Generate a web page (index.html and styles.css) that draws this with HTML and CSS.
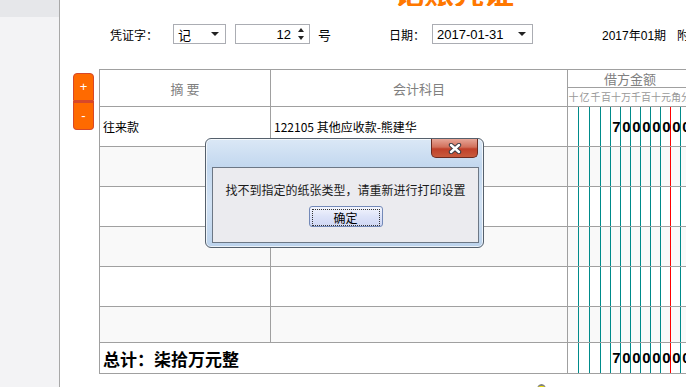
FILE: index.html
```html
<!DOCTYPE html>
<html lang="zh-CN">
<head>
    <meta charset="UTF-8">
    <title>记账凭证</title>
    <link rel="stylesheet" href="styles.css">
</head>
<body>

    <div class="app">
        <aside class="side"><div class="side-top"></div></aside>

        <main class="main">
            <div class="title"><span>记账凭证</span></div>

            <div class="form-row">
                <label class="lbl">凭证字：</label>
                <div class="box sel-word"><span>记</span><i class="arrow"></i></div>
                <div class="box num"><span>12</span><i class="spin"><b class="up"></b><b class="down"></b></i></div>
                <label class="lbl unit">号</label>
                <label class="lbl date-lbl">日期：</label>
                <div class="box sel-date"><span>2017-01-31</span><i class="arrow"></i></div>
                <span class="period">2017年01期</span>
                <span class="attach">附</span>
            </div>

            <div class="voucher">
                <div class="row-tools">
                    <button class="tool add">+</button>
                    <button class="tool del">-</button>
                </div>

                <table class="grid">
                    <colgroup>
                        <col class="c-memo">
                        <col class="c-subject">
                        <col class="c-money">
                    </colgroup>
                    <tr class="head">
                        <th>摘 要</th>
                        <th>会计科目</th>
                        <th class="money">
                            <div class="money-title">借方金额</div>
                            <div class="units">
                                <span>十</span><span>亿</span><span>千</span><span>百</span><span>十</span><span>万</span><span>千</span><span>百</span><span>十</span><span>元</span><span>角</span><span>分</span>
                            </div>
                        </th>
                    </tr>
                    <tr class="line">
                        <td>往来款</td>
                        <td>122105 其他应收款-熊建华</td>
                        <td class="money">
                            <div class="digits">
                                <span></span><span></span><span></span><span></span><span>7</span><span>0</span><span>0</span><span>0</span><span>0</span><span>0</span><span>0</span><span>0</span>
                            </div>
                        </td>
                    </tr>
                    <tr class="line alt">
                        <td></td><td></td>
                        <td class="money"><div class="digits"><span></span><span></span><span></span><span></span><span></span><span></span><span></span><span></span><span></span><span></span><span></span><span></span></div></td>
                    </tr>
                    <tr class="line">
                        <td></td><td></td>
                        <td class="money"><div class="digits"><span></span><span></span><span></span><span></span><span></span><span></span><span></span><span></span><span></span><span></span><span></span><span></span></div></td>
                    </tr>
                    <tr class="line alt">
                        <td></td><td></td>
                        <td class="money"><div class="digits"><span></span><span></span><span></span><span></span><span></span><span></span><span></span><span></span><span></span><span></span><span></span><span></span></div></td>
                    </tr>
                    <tr class="line">
                        <td></td><td></td>
                        <td class="money"><div class="digits"><span></span><span></span><span></span><span></span><span></span><span></span><span></span><span></span><span></span><span></span><span></span><span></span></div></td>
                    </tr>
                    <tr class="line alt short">
                        <td></td><td></td>
                        <td class="money"><div class="digits"><span></span><span></span><span></span><span></span><span></span><span></span><span></span><span></span><span></span><span></span><span></span><span></span></div></td>
                    </tr>
                    <tr class="total">
                        <td colspan="2">总计：柒拾万元整</td>
                        <td class="money">
                            <div class="digits">
                                <span></span><span></span><span></span><span></span><span>7</span><span>0</span><span>0</span><span>0</span><span>0</span><span>0</span><span>0</span><span>0</span>
                            </div>
                        </td>
                    </tr>
                </table>
            </div>

            <div class="foot"><i class="bulb"></i></div>
        </main>
    </div>

    <!-- 打印提示框 -->
    <div class="dialog">
        <div class="close">
            <svg width="14" height="11" viewBox="0 0 14 11">
                <path d="M3 2 L11 9 M11 2 L3 9" stroke="#3c3c44" stroke-width="4.4" stroke-linecap="round"/>
                <path d="M3 2 L11 9 M11 2 L3 9" stroke="#ffffff" stroke-width="2.4" stroke-linecap="round"/>
            </svg>
        </div>
        <div class="panel">
            <p class="msg">找不到指定的纸张类型，请重新进行打印设置</p>
            <button class="ok"><span>确定</span></button>
        </div>
    </div>

</body>
</html>
```

FILE: styles.css
```css
body {
    margin: 0;
    overflow: hidden;
    background: #ffffff;
    font-family: "Noto Sans CJK SC", "Liberation Sans", sans-serif;
    font-size: 12px;
    color: #000;
}
.app {
    display: flex;
    height: 387px;
}
.side {
    width: 59px;
    flex: none;
    background: #f3f3f5;
    border-right: 1px solid #a8a8a8;
}
.side-top {
    height: 17px;
    background: #e6e7ea;
}
.main {
    flex: 1;
    min-width: 0;
    overflow: hidden;
}

/* 标题只露出底部 */
.title {
    height: 6px;
    overflow: hidden;
    padding-left: 334px;
}
.title span {
    display: block;
    margin-top: -24px;
    font-size: 30px;
    line-height: 30px;
    font-weight: bold;
    color: #ff7800;
    white-space: nowrap;
}

.form-row {
    display: flex;
    align-items: center;
    height: 20px;
    margin-top: 18px;
    padding-left: 50px;
    white-space: nowrap;
    font-size: 12px;
}
.form-row > * {
    flex: none;
}
.lbl {
    width: 63px;
}
.box {
    position: relative;
    box-sizing: border-box;
    height: 20px;
    border: 1px solid #abadb3;
    background: #fff;
    display: flex;
    align-items: center;
    font-size: 13px;
}
.sel-word {
    width: 53px;
    padding-left: 4px;
}
.num {
    width: 75px;
    margin-left: 9px;
    justify-content: flex-end;
    padding-right: 18px;
    font-family: "Liberation Sans", sans-serif;
}
.arrow {
    position: absolute;
    right: 6px;
    top: 7px;
    border-left: 4px solid transparent;
    border-right: 4px solid transparent;
    border-top: 4px solid #222;
}
.spin b {
    position: absolute;
    right: 5px;
    border-left: 3px solid transparent;
    border-right: 3px solid transparent;
}
.spin .up {
    top: 3px;
    border-bottom: 4px solid #222;
}
.spin .down {
    bottom: 3px;
    border-top: 4px solid #222;
}
.unit {
    width: auto;
    margin-left: 8px;
    font-size: 13px;
}
.date-lbl {
    width: 43px;
    margin-left: 58px;
}
.sel-date {
    width: 101px;
    padding-left: 4px;
    font-family: "Liberation Sans", sans-serif;
}
.period {
    margin-left: 69px;
    font-size: 12px;
}
.period, .attach {
    font-family: "Liberation Sans", "Noto Sans CJK SC", sans-serif;
}
.attach {
    margin-left: 11px;
}

/* 凭证表格 */
.voucher {
    display: flex;
    align-items: flex-start;
    margin-top: 25px;
    padding-left: 13px;
}
.row-tools {
    flex: none;
    display: flex;
    flex-direction: column;
    width: 21px;
    margin-top: 4px;
    margin-right: 5px;
}
.tool {
    width: 21px;
    padding: 0;
    border: 1px solid #d6482a;
    background: #ff6a00;
    color: #fff;
    font-family: "Liberation Sans", sans-serif;
    font-size: 13px;
    line-height: 20px;
}
.tool.add {
    border-radius: 4px 4px 0 0;
    height: 28px;
}
.tool.del {
    border-radius: 0 0 4px 4px;
    border-top-width: 2px;
    height: 29px;
}
.grid {
    flex: none;
    border-collapse: collapse;
    table-layout: fixed;
    width: 593px;
}
.c-memo { width: 171px; }
.c-subject { width: 297px; }
.c-money { width: 125px; }
.grid td, .grid th {
    border: 1px solid #a0a0a0;
    padding: 0 0 0 3px;
    text-align: left;
    font-weight: normal;
    white-space: nowrap;
    overflow: hidden;
}
.head th {
    height: 36px;
    text-align: center;
    color: #808080;
    font-size: 13px;
    padding: 0;
}
.line td {
    height: 39px;
    font-size: 12px;
}
.line.short td {
    height: 35px;
}
.alt td {
    background: #f9f9f9;
}
.grid .money {
    padding: 0;
    vertical-align: top;
}
.money-title {
    height: 17px;
    line-height: 17px;
    border-bottom: 1px solid #a0a0a0;
    font-size: 13px;
    color: #808080;
}
.units, .digits {
    display: grid;
    grid-template-columns: 11px 11px 11px 10px 10px 10px 10px 10px 10px 10px 10px 10px;
}
.units {
    height: 18px;
    line-height: 18px;
    font-size: 10px;
    color: #999;
}
.digits {
    height: 39px;
}
.digits span {
    box-sizing: border-box;
    border-right: 1px solid #008b8b;
    text-align: center;
    font-family: "Liberation Sans", sans-serif;
    font-weight: bold;
    font-size: 15px;
    line-height: 39px;
    letter-spacing: -1px;
    text-indent: 1px;
}
.digits span:nth-child(10) {
    border-right-color: #ff0000;
}
.short .digits {
    height: 35px;
}
.total td {
    height: 30px;
    font-size: 17px;
    font-weight: bold;
}
.total .digits {
    height: 30px;
}
.total .digits span {
    line-height: 30px;
}
.foot {
    position: relative;
    height: 20px;
}
.bulb {
    position: absolute;
    left: 477px;
    top: 10px;
    width: 9px;
    height: 9px;
    border-radius: 50%;
    background: #f5e500;
    border-top: 2px solid #808080;
}

/* 弹窗 */
.dialog {
    position: absolute;
    left: 205px;
    top: 138px;
    width: 279px;
    height: 110px;
    box-sizing: border-box;
    border: 1px solid #55606c;
    border-radius: 6px;
    background: linear-gradient(180deg, #dbe8f6 0%, #c3d8ef 25%, #d2e2f4 60%, #bcd3ec 100%);
    box-shadow: inset 0 0 0 1px rgba(255, 255, 255, 0.7);
}
.close {
    position: absolute;
    left: 225px;
    top: 0;
    width: 47px;
    height: 19px;
    box-sizing: border-box;
    border: 1px solid #6b2a20;
    border-top: none;
    border-radius: 0 0 5px 5px;
    background: linear-gradient(180deg, #e6a597 0%, #d2705b 45%, #c0402a 55%, #c85b3e 100%);
    display: flex;
    justify-content: center;
    align-items: center;
}
.panel {
    position: absolute;
    left: 6px;
    top: 28px;
    width: 267px;
    height: 76px;
    box-sizing: border-box;
    border: 1px solid #6c7785;
    background: #ebebef;
    text-align: center;
}
.msg {
    margin: 14px 0 0;
    font-size: 12px;
    line-height: 16px;
    color: #1a1a1a;
}
.ok {
    margin-top: 8px;
    width: 74px;
    height: 21px;
    padding: 2px;
    border: 1px solid #7389b8;
    border-radius: 3px;
    background: linear-gradient(180deg, #f3f5fd 0%, #dde3f8 50%, #cfd7f4 100%);
    font-family: "Noto Sans CJK SC", sans-serif;
    font-size: 12px;
    color: #000;
}
.ok span {
    display: block;
    height: 15px;
    line-height: 15px;
    border: 1px dotted #333;
}
```
